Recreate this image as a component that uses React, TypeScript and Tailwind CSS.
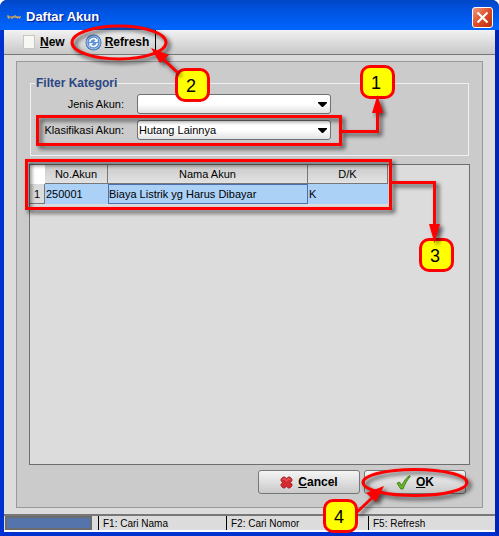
import type { ReactNode } from "react";

const STATUS = [
  { text: "F1: Cari Nama", width: "w-32" },
  { text: "F2: Cari Nomor", width: "w-[142px]" },
  { text: "F5: Refresh", width: "flex-1" },
];

const KLASIFIKASI = ["Hutang Lainnya", "Hutang Usaha"];

function Combo({ id, label, options }: { id: string; label: string; options: string[] }) {
  return (
    <div className="flex h-5 items-center">
      <label htmlFor={id} className="w-[89px] shrink-0 text-right">
        {label}
      </label>
      <div className="relative ml-[13px] w-[194px]">
        <select
          id={id}
          className="block h-5 w-full appearance-none rounded-[3px] border border-[#707070] bg-linear-to-b from-white from-50% to-[#e2e2e2] pl-px text-[11px] leading-4 text-black"
        >
          {options.map((option) => (
            <option key={option}>{option}</option>
          ))}
        </select>
        <svg className="pointer-events-none absolute top-2 right-1" width="9" height="5" viewBox="0 0 9 5">
          <path d="M0 0h9v1L5 5H4L0 1z" fill="#000" />
        </svg>
      </div>
    </div>
  );
}

function DialogButton({ icon, children }: { icon: ReactNode; children: ReactNode }) {
  return (
    <button
      type="button"
      className="flex h-6 w-[102px] items-center justify-center gap-[5px] rounded-[3px] border border-[#777] bg-linear-to-b from-[#f5f5f5] to-[#c9c9c9] text-[12px] font-bold"
    >
      {icon}
      <span>{children}</span>
    </button>
  );
}

function Badge({ n, place }: { n: number; place: string }) {
  return (
    <div
      className={`absolute flex h-[34px] w-[35px] items-center justify-center rounded-[10px] border-3 border-[#ff0000] bg-[#ffff00] pt-[2px] pr-[3px] text-[18px] leading-none ${place}`}
    >
      {n}
    </div>
  );
}

function RefreshIcon() {
  return (
    <svg width="17" height="17" viewBox="0 0 17 17">
      <circle cx="8.5" cy="8.5" r="8" fill="#3f72b8" />
      <circle cx="8.5" cy="8.5" r="6.6" fill="#5f93d6" stroke="#b7d0f0" strokeWidth="0.9" />
      <g fill="none" stroke="#fff" strokeWidth="1.6">
        <path d="M4.6 7.8a4 4 0 0 1 6.6-2.200" />
        <path d="M12.4 9.2a4 4 0 0 1-6.6 2.200" />
      </g>
      <path d="M12.600 4.200v3.800H8.800zM4.400 12.800V9h3.800z" fill="#fff" />
    </svg>
  );
}

function CrossIcon() {
  return (
    <svg width="13" height="13" viewBox="0 0 13 13">
      <path
        d="M3.2 1h1.600L6.500 3 8.200 1h1.600L12 3.200v1.600L10.200 6.500 12 8.200v1.600L9.800 12H8.200L6.500 10 4.800 12H3.200L1 9.800V8.200L2.800 6.500 1 4.800V3.200z"
        fill="#d22a2e"
        stroke="#a8262a"
        strokeLinejoin="round"
      />
      <path d="M2.500 4 4 2.500l2.500 2.300L9 2.500 10.500 4" fill="none" stroke="#ec6f72" />
    </svg>
  );
}

function CheckIcon() {
  return (
    <svg width="15" height="15" viewBox="0 0 15 15">
      <path
        d="M1 8.2 3.4 7l2.3 3.5C7.6 6.5 10 3 13.4.7l.8.7C11 5.3 8.8 9.3 7 14H4.800z"
        fill="#69b32b"
        stroke="#3f8217"
        strokeWidth="0.9"
        strokeLinejoin="round"
      />
    </svg>
  );
}

// Red outlines and arrows drawn on top of the dialog
function Callouts() {
  return (
    <div className="pointer-events-none absolute inset-0">
      <Badge n={1} place="left-[360px] top-[65px]" />
      <Badge n={2} place="left-[175px] top-[68px]" />
      <Badge n={3} place="left-[419px] top-[238px]" />
      <Badge n={4} place="left-[323px] top-[499px]" />
      <svg className="absolute inset-0 h-full w-full drop-shadow-[3px_3px_2px_rgba(0,0,0,0.65)]">
        <g fill="none" stroke="#f00" strokeWidth="3">
          <ellipse cx="119" cy="42.5" rx="47" ry="16.5" />
          <ellipse cx="415" cy="482.5" rx="52" ry="13" />
          <rect x="37.5" y="116.5" width="303" height="28" />
          <rect x="26.5" y="160.5" width="364" height="48" />
          <path d="M339 131.5h38.5V110" />
          <path d="M389 182.5h45.5V228" />
          <path d="M178 73 160 56" />
          <path d="M357 512 374 496" />
        </g>
        <g fill="#f00">
          <path d="M377.5 95 383 113h-11z" />
          <path d="M434.5 243 429 224h11z" />
          <path d="M151 48 169 55l-9 8z" />
          <path d="M384 486 376 502l-10-9z" />
        </g>
      </svg>
    </div>
  );
}

export default function App() {
  return (
    <div className="relative flex min-h-screen flex-col rounded-t-[7px] bg-linear-to-r from-[#0018a8] via-[#0a5cf0] to-[#00138c] font-['Liberation_Sans',Arial,sans-serif] text-[11px] leading-4 text-black">
      <header className="flex h-[30px] items-center rounded-t-[7px] bg-linear-to-b from-[#0047c8] via-[#0054e3] via-40% to-[#0066ff] pr-[6px] pl-[7px] pt-1">
        <svg width="14" height="6" viewBox="0 0 14 6">
          <path
            d="M0 2h2v1H1v1h2M4 2v2h2V2M7 4V2h2v2M10 2v2h1V3h1v1h1V2"
            fill="none"
            stroke="#f5b640"
          />
        </svg>
        <h1 className="ml-[5px] flex-1 text-[13px] font-bold text-white [text-shadow:1px_1px_1px_#0a1883]">
          Daftar Akun
        </h1>
        <button
          type="button"
          aria-label="Close"
          className="flex size-[21px] items-center justify-center rounded-[3px] border border-white bg-linear-to-br from-[#f09a7c] via-[#dc4c26] to-[#b8300c]"
        >
          <svg width="13" height="13" viewBox="0 0 13 13">
            <path d="m1.500 1.500 10 10M11.500 1.500l-10 10" stroke="#fff" strokeWidth="2.200" />
          </svg>
        </button>
      </header>

      <div className="flex flex-1 flex-col border-x-4 border-b-4 border-r-[#0024b4] border-b-[#0030d0] border-l-[#0030d0] bg-[#dcdcdc]">
        <div className="flex h-[25px] items-stretch border-b border-b-[#777] bg-linear-to-b from-[#f2f2f2] to-[#c8c8c8] pl-[19px] text-[12px] font-bold">
          <button type="button" className="flex items-center gap-[5px]">
            <span className="h-[14px] w-3 border border-[#c8c8c0] bg-[#f7f7f4]" />
            <span>
              <u>N</u>ew
            </span>
          </button>
          <button type="button" className="ml-5 flex items-center gap-[3px] border-r border-black pr-[6px]">
            <RefreshIcon />
            <span>
              <u>R</u>efresh
            </span>
          </button>
        </div>

        <main className="mx-3 mt-[6px] mb-[6px] flex flex-1 flex-col border border-[#999] bg-[#cbcbcb] px-3 pt-[13px] pb-[13px]">
          <fieldset className="mx-px h-[81px] border border-[#f0f0f0] px-1">
            <legend className="pl-px text-[12px] font-bold text-[#2b4783]">Filter Kategori</legend>
            <div className="flex flex-col gap-[6px] pt-[3px]">
              <Combo id="jenis" label="Jenis Akun:" options={["", "Hutang"]} />
              <Combo id="klasifikasi" label="Klasifikasi Akun:" options={KLASIFIKASI} />
            </div>
          </fieldset>

          <div className="mt-2 flex-1 border border-[#6e6e6e] bg-[#dcdcdc]">
            <table className="w-[358px] table-fixed border-separate border-spacing-0">
              <colgroup>
                <col className="w-[15px]" />
                <col className="w-[63px]" />
                <col className="w-[200px]" />
                <col className="w-20" />
              </colgroup>
              <thead>
                <tr className="h-[19px]">
                  <th className="bg-white p-0" />
                  {["No.Akun", "Nama Akun", "D/K"].map((title) => (
                    <th
                      key={title}
                      className="border-r border-b border-[#777] bg-linear-to-b from-[#cacaca] to-[#e2e2e2] p-0 font-normal"
                    >
                      {title}
                    </th>
                  ))}
                </tr>
              </thead>
              <tbody>
                <tr className="h-5 bg-[#abd1f7]">
                  <th className="border-r border-b border-[#777] bg-[#dcdcdc] p-0 font-normal">1</th>
                  <td className="p-0 pl-px">250001</td>
                  <td className="border border-[#4e6fac] p-0">Biaya Listrik yg Harus Dibayar</td>
                  <td className="p-0 pl-px">K</td>
                </tr>
              </tbody>
            </table>
          </div>

          <div className="mt-[5px] flex justify-end gap-1 pr-1">
            <DialogButton icon={<CrossIcon />}>
              <u>C</u>ancel
            </DialogButton>
            <DialogButton icon={<CheckIcon />}>
              <u>O</u>K
            </DialogButton>
          </div>
        </main>

        <footer className="flex h-[18px] border-t-2 border-b-2 border-t-[#777] border-b-white pl-px text-[10px] leading-[15px]">
          <div className="w-[87px] border-2 border-[#6c6c6c] bg-[#5674ac]" />
          <div className="w-[6px]" />
          {STATUS.map((item) => (
            <div key={item.text} className={`border-l border-black pl-1 ${item.width}`}>
              {item.text}
            </div>
          ))}
        </footer>
      </div>

      <Callouts />
    </div>
  );
}
